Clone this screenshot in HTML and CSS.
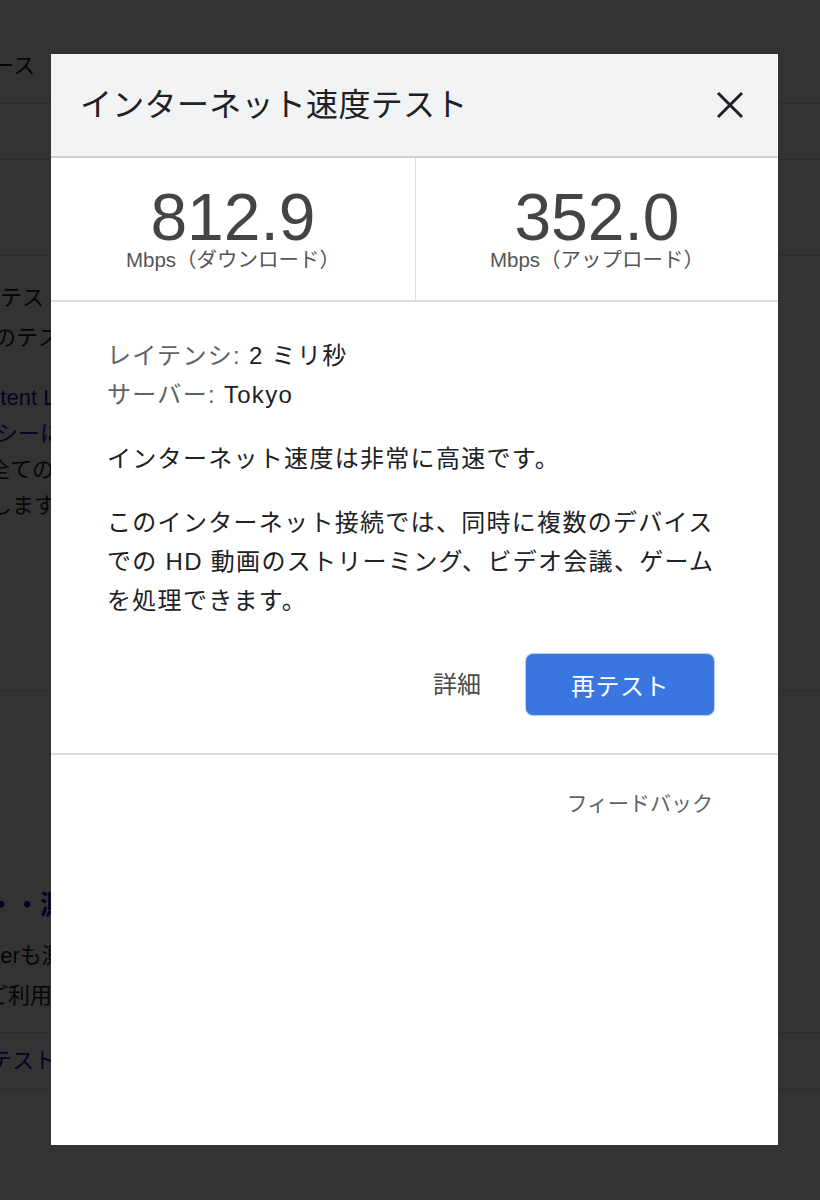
FILE: index.html
```html
<!DOCTYPE html>
<html lang="ja">
<head>
    <meta charset="UTF-8">
    <meta name="viewport" content="width=device-width, initial-scale=1.0">
    <title>インターネット速度テスト</title>
    <link rel="stylesheet" href="styles.css">
</head>
<body>
    <!-- page behind the dialog -->
    <div class="page">
        <div class="page-top"><span class="cut cut-top">ニュース</span></div>
        <div class="page-row r1"></div>
        <div class="page-row r2"></div>
        <div class="page-text">
            <p class="p1"><span>テスト</span><span class="cut cut-a">多くのテスト</span></p>
            <p class="p2">
                <span class="link cut cut-b">Content Loader</span>
                <span class="link cut cut-c">ポリシーに</span>
                <span class="cut cut-d">全ての</span>
                <span class="cut cut-e">致します</span>
            </p>
        </div>
        <div class="page-row r3"></div>
        <div class="page-section">
            <h3 class="cut cut-f">速度・・測定</h3>
            <p><span class="cut cut-g">Serverも測</span><span class="cut cut-h">ご利用</span></p>
        </div>
        <div class="page-link"><span class="link">テスト</span></div>
    </div>

    <div class="overlay">
        <div class="dialog">
            <div class="dialog-header">
                <h1>インターネット速度テスト</h1>
                <button class="close" aria-label="閉じる">
                    <svg width="28" height="28" viewBox="0 0 28 28">
                        <path d="M2 2 L26 26 M26 2 L2 26" stroke="#202124" stroke-width="3" fill="none"/>
                    </svg>
                </button>
            </div>
            <div class="stats">
                <div class="stat">
                    <div class="value">812.9</div>
                    <div class="unit">Mbps（ダウンロード）</div>
                </div>
                <div class="stat">
                    <div class="value">352.0</div>
                    <div class="unit">Mbps（アップロード）</div>
                </div>
            </div>
            <div class="details">
                <div class="meta">
                    <div><span class="key">レイテンシ:</span> 2 ミリ秒</div>
                    <div><span class="key">サーバー:</span> Tokyo</div>
                </div>
                <p>インターネット速度は非常に高速です。</p>
                <p>このインターネット接続では、同時に複数のデバイスでの HD 動画のストリーミング、ビデオ会議、ゲームを処理できます。</p>
                <div class="actions">
                    <a class="more" href="#">詳細</a>
                    <button class="retest">再テスト</button>
                </div>
            </div>
            <div class="dialog-footer">
                <a href="#">フィードバック</a>
            </div>
        </div>
    </div>
</body>
</html>
```

FILE: styles.css
```css
html, body {
    margin: 0;
    height: 1200px;
    overflow: hidden;
}
body {
    font-family: "Liberation Sans", "Noto Sans CJK JP", sans-serif;
    background-color: #fff;
    color: #202124;
}

/* background page */
.page {
    color: #222;
    font-size: 22px;
}
.page .cut {
    display: block;
    white-space: nowrap;
}
.page-top {
    height: 103px;
    border-bottom: 1px solid #ddd;
    line-height: 28px;
}
.cut-top {
    padding-top: 52px;
    margin-left: -52px;
}
.page-row {
    border-bottom: 1px solid #ddd;
}
.r1 {
    height: 55px;
}
.r2 {
    height: 95px;
}
.page-text {
    height: 434px;
}
.page-text p {
    margin: 0;
}
.p1 {
    padding-top: 22px;
    line-height: 40px;
}
.p1 span {
    display: block;
}
.cut-a {
    margin-left: -50px;
}
.p2 {
    padding-top: 22px;
    line-height: 36px;
}
.link {
    color: #1a0dab;
}
.cut-b {
    margin-left: -40px;
}
.cut-c {
    margin-left: -48px;
}
.cut-d {
    margin-left: -12px;
}
.cut-e {
    margin-left: -32px;
}
.r3 {
    height: 0;
}
.page-section {
    height: 342px;
    padding-top: 197px;
    border-bottom: 1px solid #ddd;
    box-sizing: border-box;
}
.page-section h3 {
    margin: 0 0 0 -64px;
    font-size: 26px;
    line-height: 34px;
    color: #1a0dab;
}
.page-section p {
    margin: 14px 0 0;
    line-height: 40px;
}
.cut-g {
    margin-left: -45px;
}
.cut-h {
    margin-left: -14px;
}
.page-link {
    height: 56px;
    border-bottom: 1px solid #ddd;
    line-height: 56px;
    margin-left: -10px;
}

/* dialog */
.overlay {
    position: fixed;
    inset: 0;
    background-color: rgba(0, 0, 0, 0.8);
    padding: 54px 0 0 51px;
}
.dialog {
    width: 727px;
    height: 1091px;
    background-color: #fff;
    display: flex;
    flex-direction: column;
}
.dialog-header {
    height: 102px;
    background-color: #f1f3f4;
    border-bottom: 2px solid #cfcfcf;
    display: flex;
    align-items: center;
    justify-content: space-between;
    padding: 0 34px 0 29px;
}
.dialog-header h1 {
    margin: 0;
    font-size: 32px;
    font-weight: 400;
    letter-spacing: 0.3px;
    line-height: 40px;
}
.close {
    background: none;
    border: none;
    padding: 0;
    width: 28px;
    height: 28px;
    cursor: pointer;
}
.close svg {
    display: block;
}
.stats {
    display: grid;
    grid-template-columns: 364px 1fr;
    height: 142px;
    border-bottom: 2px solid #dcdcdc;
}
.stat {
    display: flex;
    flex-direction: column;
    align-items: center;
    padding-top: 29px;
}
.stat + .stat {
    border-left: 1px solid #dcdcdc;
}
.value {
    font-size: 66px;
    line-height: 60px;
    color: #444;
}
.unit {
    font-size: 20.5px;
    line-height: 24px;
    margin-top: 1px;
    color: #555;
}
.details {
    padding: 34px 56px 38px 56px;
    border-bottom: 2px solid #dcdcdc;
    font-size: 24px;
    line-height: 39px;
    letter-spacing: 1.3px;
    color: #202124;
}
.meta .key {
    color: #5f6368;
}
.details p {
    margin: 25px 0 0;
}
.actions {
    display: flex;
    justify-content: flex-end;
    align-items: center;
    gap: 45px;
    margin-top: 34px;
    padding-right: 8px;
}
.more {
    color: #4a4a4a;
    text-decoration: none;
    letter-spacing: 0;
}
.retest {
    width: 188px;
    height: 61px;
    border: none;
    border-radius: 7px;
    background-color: #3a76e0;
    box-shadow: 0 0 0 1px rgba(58, 118, 224, 0.35);
    color: #fff;
    font-family: inherit;
    font-size: 24px;
    letter-spacing: 0.5px;
    cursor: pointer;
}
.dialog-footer {
    display: flex;
    justify-content: flex-end;
    padding: 34px 65px 0 0;
}
.dialog-footer a {
    font-size: 21px;
    line-height: 30px;
    color: #5f6368;
    text-decoration: none;
}
```
